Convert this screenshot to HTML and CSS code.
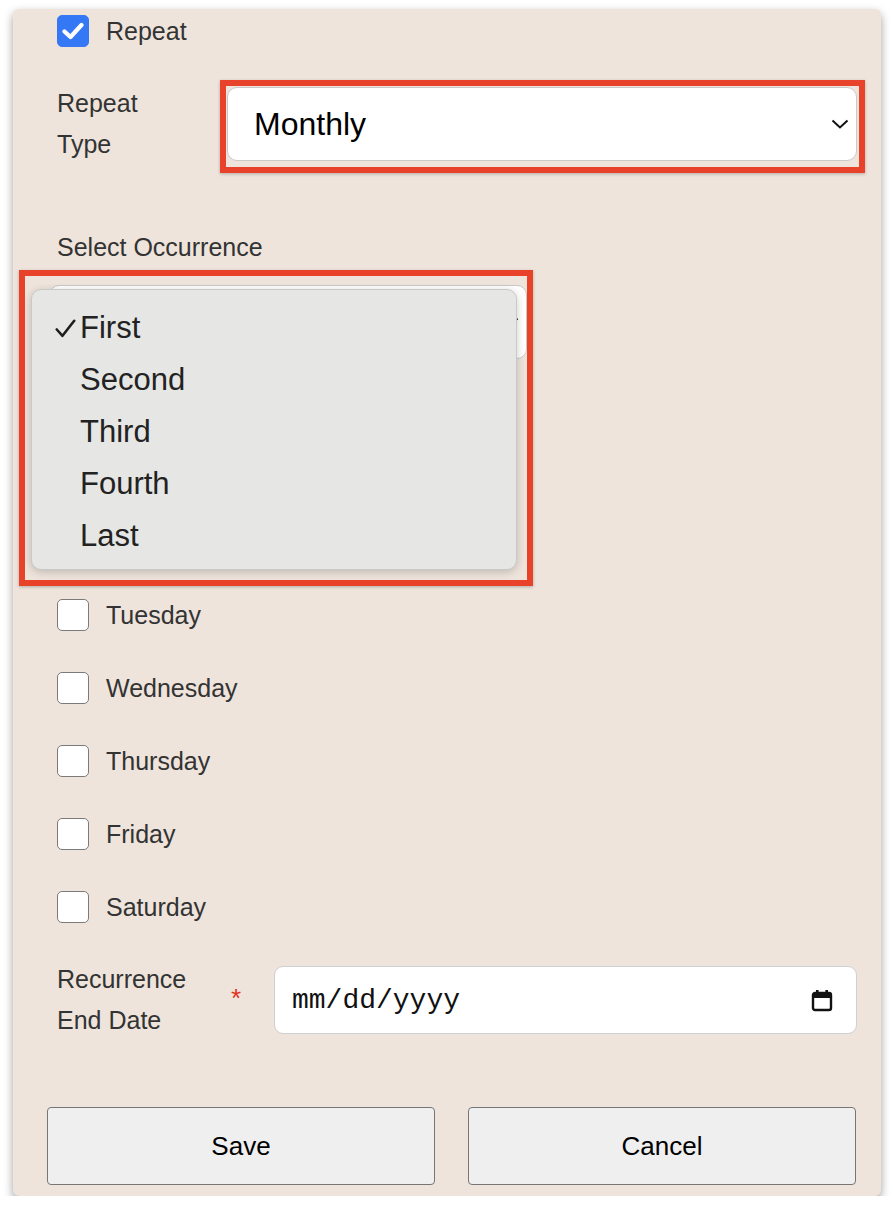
FILE: index.html
```html
<!DOCTYPE html>
<html>
<head>
<meta charset="utf-8">
<link rel="stylesheet" href="styles.css">
</head>
<body>
<div class="panel">
  <div class="check-row">
    <span class="box checked">
      <svg width="22" height="18" viewBox="0 0 22 18"><path d="M2.5 9.5 L8.5 15 L19.5 3" fill="none" stroke="#fff" stroke-width="4.2" stroke-linecap="round" stroke-linejoin="round"/></svg>
    </span>
    <span class="check-label">Repeat</span>
  </div>

  <div class="field-row repeat-type">
    <div class="label two-line">Repeat<br>Type</div>
    <div class="select big">
      <span>Monthly</span>
      <svg class="chev" width="18" height="10" viewBox="0 0 18 10"><path d="M1.5 1.5 L9 8.5 L16.5 1.5" fill="none" stroke="#111" stroke-width="2"/></svg>
    </div>
  </div>

  <div class="label occ-label">Select Occurrence</div>
  <div class="select occ-select">
    <svg class="chev" width="18" height="10" viewBox="0 0 18 10"><path d="M1.5 1.5 L9 8.5 L16.5 1.5" fill="none" stroke="#111" stroke-width="2"/></svg>
  </div>

  <div class="days">
    <div class="check-row"><span class="box"></span></div>
    <div class="check-row"><span class="box"></span></div>
    <div class="check-row"><span class="box"></span><span class="check-label">Tuesday</span></div>
    <div class="check-row"><span class="box"></span><span class="check-label">Wednesday</span></div>
    <div class="check-row"><span class="box"></span><span class="check-label">Thursday</span></div>
    <div class="check-row"><span class="box"></span><span class="check-label">Friday</span></div>
    <div class="check-row"><span class="box"></span><span class="check-label">Saturday</span></div>
  </div>

  <div class="field-row end-date">
    <div class="label two-line end-label">Recurrence<br>End Date</div>
    <span class="req">*</span>
    <div class="date-input">
      <span class="date-text">mm/dd/yyyy</span>
      <svg class="cal" width="22" height="23" viewBox="0 0 22 23"><rect x="2" y="4" width="18" height="17" rx="2" fill="none" stroke="#111" stroke-width="2.4"/><rect x="2" y="4" width="18" height="5" fill="#111"/><rect x="5" y="1" width="2.6" height="5" fill="#111"/><rect x="14.4" y="1" width="2.6" height="5" fill="#111"/></svg>
    </div>
  </div>

  <div class="buttons">
    <button class="btn">Save</button>
    <button class="btn">Cancel</button>
  </div>

  <div class="annot annot-type"></div>

  <div class="menu">
    <div class="opt"><svg class="tick" width="21" height="19" viewBox="0 0 21 19"><path d="M1.8 10.5 L7.5 16.8 L19.2 1.8" fill="none" stroke="#1e1e1e" stroke-width="2.6" stroke-linecap="round" stroke-linejoin="round"/></svg>First</div>
    <div class="opt">Second</div>
    <div class="opt">Third</div>
    <div class="opt">Fourth</div>
    <div class="opt">Last</div>
  </div>

  <div class="annot annot-occ"></div>
</div>
</body>
</html>
```

FILE: styles.css
```css
html, body {
  margin: 0;
  padding: 0;
  background: #ffffff;
}

body {
  font-family: "Liberation Sans", Arial, sans-serif;
  color: #333333;
}

.panel {
  position: relative;
  box-sizing: border-box;
  margin: 9px 0 0 13px;
  width: 868px;
  height: 1187px;
  padding: 6px 24px 10px 44px;
  background: #eee4dc;
  border-radius: 6px;
  box-shadow: 0 4px 10px rgba(0, 0, 0, 0.38);
  display: flex;
  flex-direction: column;
}

.check-row {
  display: flex;
  align-items: center;
  gap: 17px;
  height: 32px;
}

.box {
  box-sizing: border-box;
  width: 32px;
  height: 32px;
  border: 1.5px solid #7a7a7a;
  border-radius: 5px;
  background: #ffffff;
  display: flex;
  align-items: center;
  justify-content: center;
  flex: none;
}

.box.checked {
  background: #3478f6;
  border-color: #3478f6;
}

.check-label {
  font-size: 25px;
  color: #333333;
}

.label {
  font-size: 25px;
  line-height: 41px;
  color: #333333;
}

.field-row {
  display: flex;
}

.repeat-type {
  margin-top: 36px;
  align-items: flex-start;
}

.repeat-type .label {
  width: 170px;
  flex: none;
}

.select {
  position: relative;
  box-sizing: border-box;
  background: #ffffff;
  border: 1.5px solid #c9c9c9;
  border-radius: 10px;
  height: 74px;
  display: flex;
  align-items: center;
  color: #000000;
}

.select.big {
  flex: 1;
  margin-top: 4px;
  padding-left: 26px;
  font-size: 32px;
}

.chev {
  position: absolute;
  right: 7px;
  top: 31px;
}

.occ-label {
  margin-top: 62px;
}

.occ-select {
  margin-top: 17px;
  margin-left: -8px;
  width: 478px;
}

.days {
  display: flex;
  flex-direction: column;
  gap: 41px;
  margin-top: 94px;
}

.end-date {
  margin-top: 36px;
  align-items: center;
}

.end-label {
  width: 170px;
  flex: none;
}

.req {
  color: #e0301e;
  font-size: 26px;
  width: 47px;
  padding-left: 4px;
  box-sizing: border-box;
  flex: none;
  position: relative;
  top: -2px;
}

.date-input {
  flex: 1;
  box-sizing: border-box;
  height: 68px;
  background: #ffffff;
  border: 1.5px solid #cfcfcf;
  border-radius: 9px;
  display: flex;
  align-items: center;
  justify-content: space-between;
  padding: 0 23px 0 17px;
}

.date-text {
  font-family: "Liberation Mono", "DejaVu Sans Mono", monospace;
  font-size: 28px;
  color: #111111;
}

.buttons {
  margin-top: 66px;
  margin-left: -10px;
  display: grid;
  grid-template-columns: 388px 388px;
  gap: 33px;
}

.btn {
  box-sizing: border-box;
  height: 78px;
  background: #efefef;
  border: 1.5px solid #767676;
  border-radius: 4px;
  font-family: "Liberation Sans", Arial, sans-serif;
  font-size: 26px;
  color: #000000;
}

.annot {
  position: absolute;
  box-sizing: border-box;
  border: 6px solid #e8432a;
  box-shadow: 0 1px 3px rgba(0, 0, 0, 0.25);
}

.annot-type {
  left: 207px;
  top: 71px;
  width: 645px;
  height: 93px;
}

.annot-occ {
  left: 6px;
  top: 261px;
  width: 514px;
  height: 316px;
}

.menu {
  position: absolute;
  left: 18px;
  top: 280px;
  width: 486px;
  height: 281px;
  box-sizing: border-box;
  padding: 12px 0 0 0;
  background: #e6e6e4;
  border: 1px solid #c9c9c7;
  border-radius: 10px;
  box-shadow: 0 2px 8px rgba(0, 0, 0, 0.2);
}

.opt {
  position: relative;
  height: 52px;
  line-height: 52px;
  padding-left: 48px;
  font-size: 31px;
  color: #222222;
}

.tick {
  position: absolute;
  left: 23px;
  top: 17px;
}
```
